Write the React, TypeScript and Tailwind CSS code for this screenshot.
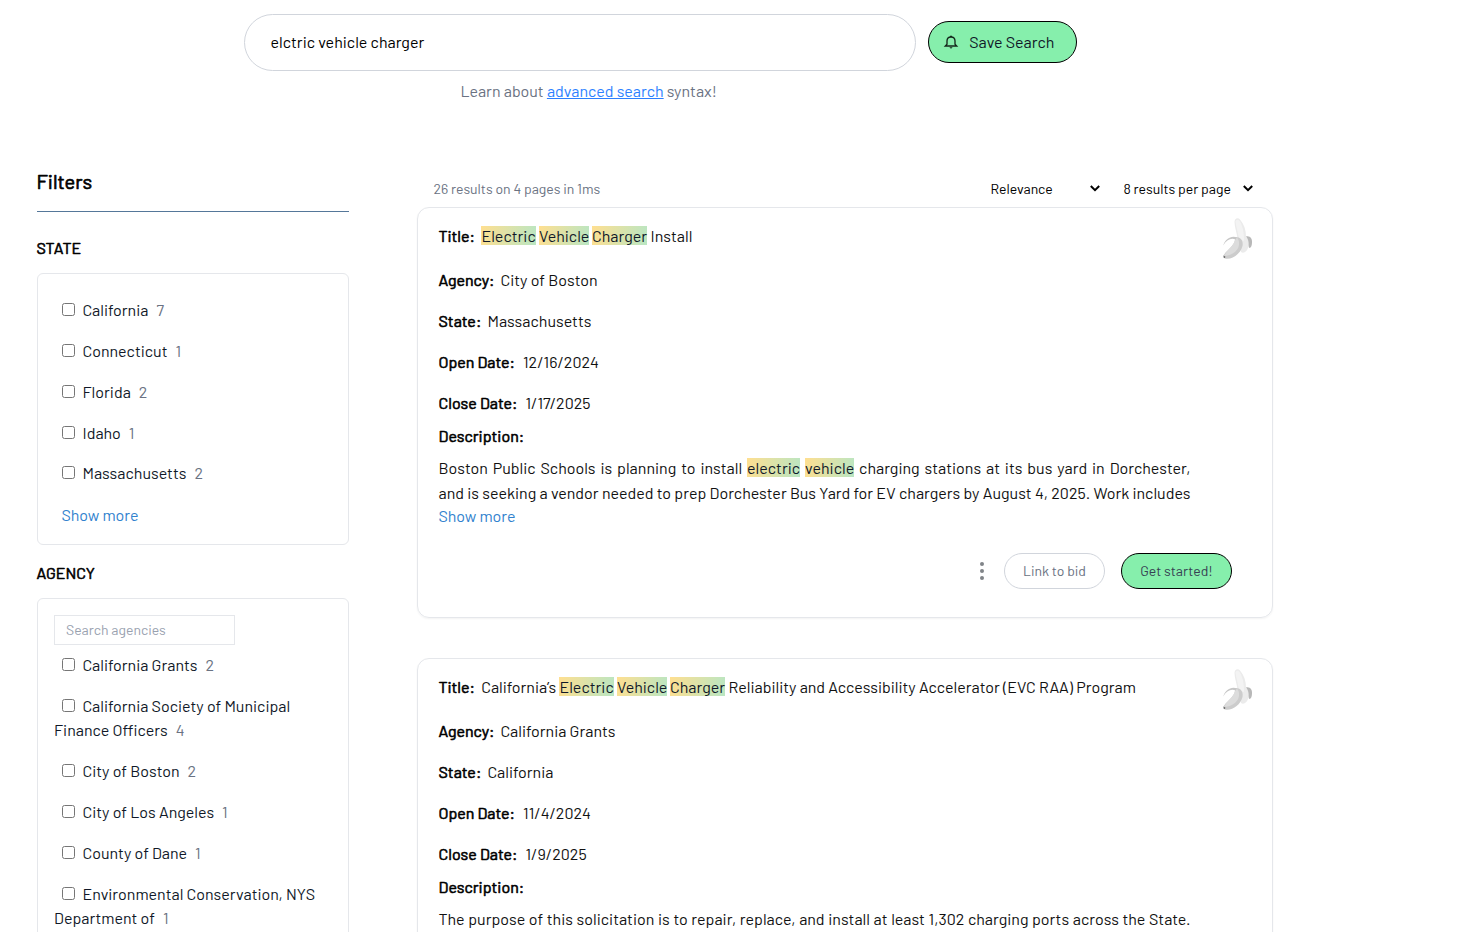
import React from "react";

function Mark({ children, className = "" }: { children: React.ReactNode; className?: string }) {
  return (
    <span className={`bg-linear-[100deg,#ffdf90,#b9e6c3] text-gray-900 inline-block h-[19px] leading-[19px] whitespace-nowrap ${className}`}>
      {children}
    </span>
  );
}

function FilterOption({ name, count, className = "" }: { name: React.ReactNode; count: number; className?: string }) {
  return (
    <label className={`block text-base leading-6 text-gray-900 ${className}`}>
      <input type="checkbox" className="ml-2 mr-[7.500px] h-[13px] w-[13px] align-[0px]" />
      {name}
      <span className="ml-2 text-gray-500">{count}</span>
    </label>
  );
}

function Chevron() {
  return (
    <svg width="10" height="7" viewBox="0 0 10 7" fill="none" stroke="black" strokeWidth="2" className="-mt-[2px]">
      <path d="M0.8 1 L5 5.2 L9.2 1" />
    </svg>
  );
}

function Banana() {
  return (
    <svg className="absolute left-[804px] top-[9px]" width="32" height="44" viewBox="0 0 32 44">
      <path d="M24 19.500 C28 18.500 30.500 21.500 30 26 C29.800 29 29 30.500 27.500 31 C26 30 26 24 24 20Z" fill="#b8b8b8" />
      <path d="M12.500 5 C12.500 1 16 0 18 2.500 C22 7 24 13 24 19.500 C26.500 22 27.500 27 26 31 C25 34 22 37 19 35 L15.500 22 C15 16 12.500 10 12.500 5Z" fill="#ebebeb" />
      <path d="M13.500 4.500 C14 2 16.500 2 18 4.500 C21 10 22 16 22 24 L17 22 C16 15 14 9 13.500 4.500Z" fill="#f3f3f3" />
      <path d="M14 20 C19 20 21.500 24 20.500 29 C18.500 37 10 43 3 41.500 L1.500 38.500 C4 34 9 31 12 26 C13 23.500 13 21 14 20Z" fill="#cccccc" />
      <path d="M14 20 C17.500 22 18 28 15.500 32 C12.500 36.500 7 39 2 38.800 C4.500 34 9 31 11.500 26.500 C13 24 13.500 21.500 14 20Z" fill="#dcdcdc" />
      <path d="M1.200 28.500 C3 22.500 9 18 15 20.500 L13.500 22.500 C9 20.500 4.500 23 1.200 28.500Z" fill="#c6c6c6" />
      <path d="M1.500 38.500 L3.300 39.500 L3 41.200 L1.500 40.500Z" fill="#6b6b6b" />
    </svg>
  );
}

function Label({ children, className = "" }: { children: React.ReactNode; className?: string }) {
  return (
    <span className={`inline-block shrink-0 text-black [-webkit-text-stroke:0.6px_black] ${className}`}>{children}</span>
  );
}

function Field({ label, children, className }: { label: string; children: React.ReactNode; className: string }) {
  return (
    <div className="flex h-[41px] items-center whitespace-nowrap">
      <Label className={className}>{label}</Label>
      <span>{children}</span>
    </div>
  );
}

type CardProps = {
  title: React.ReactNode;
  agency: React.ReactNode;
  state: React.ReactNode;
  open: string;
  close: string;
  children: React.ReactNode;
};

function BidCard({ title, agency, state, open, close, children }: CardProps) {
  return (
    <article className="relative h-[411px] w-[856px] rounded-xl border border-gray-200 pl-[20.500px] shadow-[0_1px_2px_rgba(0,0,0,0.05)] text-[#111]">
      <Banana />
      <div className="flex h-[51px] items-center pt-[5px] whitespace-nowrap">
        <Label className="w-[42.500px]">Title:</Label>
        <span className="flex items-center">{title}</span>
      </div>
      <Field label="Agency:" className="w-[62px]">{agency}</Field>
      <Field label="State:" className="w-[49px]">{state}</Field>
      <Field label="Open Date:" className="w-[84.500px]">{open}</Field>
      <Field label="Close Date:" className="w-[87px]">{close}</Field>
      <div className="mt-px h-6 leading-6"><Label>Description:</Label></div>
      <div className="mt-[7px] w-[752px]">{children}</div>
    </article>
  );
}

export default function App() {
  return (
    <div className="h-[932px] w-full overflow-hidden bg-white font-['Barlow','Roboto',sans-serif] text-base text-black">
      <header className="h-[160px] pl-[244px] pt-[14px]">
        <div className="flex items-start gap-3">
          <div className="flex h-[57px] w-[672px] items-center rounded-full border border-gray-300 pb-[2px] pl-[25.500px]">
            elctric vehicle charger
          </div>
          <button className="mt-[7px] flex h-[42px] w-[149px] items-center rounded-full border border-black bg-[#86efac] pl-[14px] text-gray-900">
            <svg width="16" height="16" viewBox="0 0 24 24" fill="none" stroke="#14271b" strokeWidth="2">
              <path d="M3.500 18 H20.500 L18 15.500 V10.500 C18 7 15.500 4.500 12 4.500 C8.500 4.500 6 7 6 10.500 V15.500 Z" />
              <path d="M12 2.500 V4.500" strokeWidth="3" />
              <path d="M9.500 20 H14.500 L12 22.300 Z" fill="#14271b" stroke="none" />
            </svg>
            <span className="ml-[10.300px] whitespace-nowrap">Save Search</span>
          </button>
        </div>
        <p className="ml-[216.400px] mt-2 leading-6 text-gray-500">
          Learn about <a className="text-blue-500 underline">advanced search</a> syntax!
        </p>
      </header>

      <div className="flex items-start">
        <aside className="ml-[37px] w-[312px]">
          <h2 className="h-[52px] border-b border-[#557799] pt-[7px] text-xl leading-7 [-webkit-text-stroke:0.7px_black]"><span className="-ml-[0.500px]">Filters</span></h2>
          <h3 className="-ml-[0.500px] mt-6 leading-6 [-webkit-text-stroke:0.6px_black]">STATE</h3>
          <div className="mt-[13px] h-[272px] rounded-md border border-gray-200 px-4 pt-6">
            <FilterOption name="California" count={7} />
            <FilterOption name="Connecticut" count={1} className="mt-[17px]" />
            <FilterOption name="Florida" count={2} className="mt-[17px]" />
            <FilterOption name="Idaho" count={1} className="mt-[17px]" />
            <FilterOption name="Massachusetts" count={2} className="mt-4" />
            <div className="ml-[7.500px] mt-[18px] leading-6 text-[#3182ce]">Show more</div>
          </div>
          <h3 className="-ml-[0.500px] mt-4 leading-6 [-webkit-text-stroke:0.6px_black]">AGENCY</h3>
          <div className="mt-[13px] h-[500px] rounded-md border border-gray-200 px-4 pt-4">
            <div className="flex h-[30px] w-[181px] items-center border border-gray-200 pl-[11px] text-sm text-gray-400">
              Search agencies
            </div>
            <FilterOption name="California Grants" count={2} className="mt-2" />
            <FilterOption name={<>California Society of Municipal<br />Finance Officers</>} count={4} className="mt-[17px]" />
            <FilterOption name="City of Boston" count={2} className="mt-[17px]" />
            <FilterOption name="City of Los Angeles" count={1} className="mt-[17px]" />
            <FilterOption name="County of Dane" count={1} className="mt-[17px]" />
            <FilterOption name={<>Environmental Conservation, NYS<br />Department of</>} count={1} className="mt-[17px]" />
          </div>
        </aside>

        <main className="ml-[68px] w-[856px]">
          <div className="flex h-[47px] items-center pl-[16.500px] pt-[11px] text-sm">
            <span className="w-[557px] text-gray-500">26 results on 4 pages in 1ms</span>
            <span className="w-[99px]">Relevance</span>
            <Chevron />
            <span className="ml-[24px] w-[119px]">8 results per page</span>
            <Chevron />
          </div>

          <BidCard
            title={
              <>
                <Mark className="mb-[2px] w-[55px] pl-[0.500px]">Electric</Mark>
                <Mark className="mb-[2px] ml-[3px] w-[50px]">Vehicle</Mark>
                <Mark className="mb-[2px] ml-[3px] w-[55px]">Charger</Mark>
                <span className="ml-[3.500px]">Install</span>
              </>
            }
            agency="City of Boston"
            state="Massachusetts"
            open="12/16/2024"
            close="1/17/2025"
          >
            <p className="h-[25px] leading-[25px] [text-align-last:justify] whitespace-nowrap">
              Boston Public Schools is planning to install <Mark>electric</Mark> <Mark>vehicle</Mark> charging stations at its bus yard in Dorchester,
            </p>
            <p className="h-[24px] leading-[25px] [text-align-last:justify] whitespace-nowrap">
              and is seeking a vendor needed to prep Dorchester Bus Yard for EV chargers by August 4, 2025. Work includes
            </p>
            <p className="leading-6 text-[#3182ce]">Show more</p>
            <div className="mt-[25px] flex w-[793.500px] items-center justify-end text-sm">
              <svg width="4" height="18" viewBox="0 0 4 18" className="mr-5 fill-[#808488]">
                <circle cx="2" cy="2" r="2" />
                <circle cx="2" cy="9" r="2" />
                <circle cx="2" cy="16" r="2" />
              </svg>
              <button className="h-9 w-[101px] rounded-full border border-gray-300 text-gray-500">Link to bid</button>
              <button className="ml-4 h-9 w-[111px] rounded-full border border-black bg-[#86efac] text-gray-700">Get started!</button>
            </div>
          </BidCard>

          <div className="h-10" />

          <BidCard
            title={
              <>
                <span className="w-[78px] pl-[0.300px]">California’s</span>
                <Mark className="mb-[2px] w-[55px] pl-[0.500px]">Electric</Mark>
                <Mark className="mb-[2px] ml-[3px] w-[50px]">Vehicle</Mark>
                <Mark className="mb-[2px] ml-[3px] w-[55px]">Charger</Mark>
                <span className="ml-[3.500px]">Reliability and Accessibility Accelerator (EVC RAA) Program</span>
              </>
            }
            agency="California Grants"
            state="California"
            open="11/4/2024"
            close="1/9/2025"
          >
            <p className="h-[25px] leading-[25px] [text-align-last:justify] whitespace-nowrap">
              The purpose of this solicitation is to repair, replace, and install at least 1,302 charging ports across the State.
            </p>
          </BidCard>
        </main>
      </div>
    </div>
  );
}
